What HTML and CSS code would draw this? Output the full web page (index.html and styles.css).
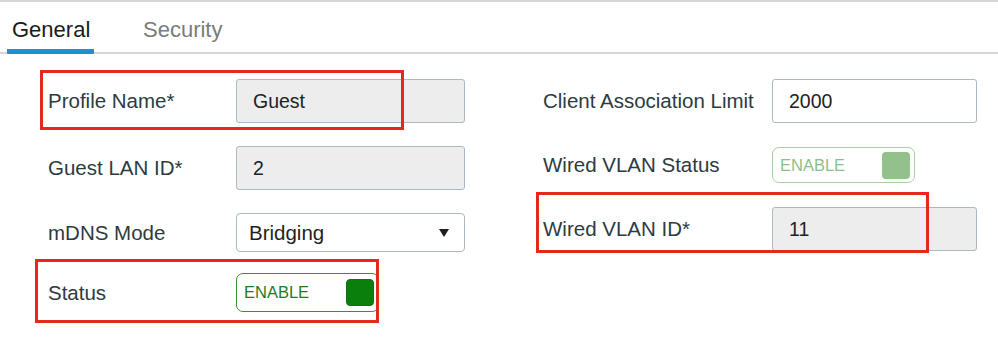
FILE: index.html
```html
<!DOCTYPE html>
<html lang="en">
<head>
    <meta charset="UTF-8">
    <title>Guest LAN Profile</title>
    <link rel="stylesheet" href="styles.css">
</head>
<body>

<div class="page">
    <div class="tabs">
        <div class="tab active">General</div>
        <div class="tab">Security</div>
    </div>

    <div class="form">
        <div class="column left">
            <div class="row">
                <div class="label">Profile Name*</div>
                <div class="field readonly">Guest</div>
            </div>
            <div class="row">
                <div class="label">Guest LAN ID*</div>
                <div class="field readonly">2</div>
            </div>
            <div class="row">
                <div class="label">mDNS Mode</div>
                <div class="select">Bridging<span class="caret"></span></div>
            </div>
            <div class="row tight">
                <div class="label">Status</div>
                <div class="toggle on">
                    <span class="toggle-text">ENABLE</span>
                    <span class="knob"></span>
                </div>
            </div>
        </div>

        <div class="column right">
            <div class="row">
                <div class="label">Client Association Limit</div>
                <div class="field">2000</div>
            </div>
            <div class="row">
                <div class="label">Wired VLAN Status</div>
                <div class="toggle disabled">
                    <span class="toggle-text">ENABLE</span>
                    <span class="knob"></span>
                </div>
            </div>
            <div class="row">
                <div class="label">Wired VLAN ID*</div>
                <div class="field readonly">11</div>
            </div>
        </div>
    </div>

    <!-- annotation boxes drawn over the form -->
    <div class="mark mark-profile"></div>
    <div class="mark mark-status"></div>
    <div class="mark mark-vlan"></div>
</div>

</body>
</html>
```

FILE: styles.css
```css
* {
    margin: 0;
    padding: 0;
    box-sizing: border-box;
}

body {
    width: 998px;
    height: 348px;
    overflow: hidden;
    background: #ffffff;
    font-family: 'Liberation Sans', Arial, sans-serif;
}

.page {
    position: relative;
    width: 998px;
    height: 348px;
}

/* Tabs */
.tabs {
    display: flex;
    height: 54px;
    padding-left: 7px;
    border-top: 2px solid #d6d6d6;
    border-bottom: 2px solid #d6d6d6;
}

.tab {
    height: 52px;
    padding: 15px 5px 6px;
    font-size: 22px;
    line-height: 26px;
    color: #7b7b7b;
}

.tab.active {
    width: 87px;
    color: #1b1b1b;
    border-bottom: 5px solid #1d8fd4;
    border-radius: 0 0 1px 1px;
}

.tab + .tab {
    margin-left: 44px;
}

/* Form */
.form {
    display: flex;
    padding: 25px 0 0 48px;
}

.column {
    display: flex;
    flex-direction: column;
    gap: 23px;
}

.column.right {
    margin-left: 78px;
    padding-top: 0;
}

.row {
    display: flex;
    align-items: center;
}

.row.tight {
    margin-top: -2px;
}

.right .row + .row {
    margin-top: 1px;
}

.label {
    font-size: 20.5px;
    color: #2d3b3f;
}

.left .label {
    width: 188px;
}

.right .label {
    width: 229px;
}

.field {
    display: flex;
    align-items: center;
    height: 44px;
    padding-left: 16px;
    border: 1px solid #a9bac6;
    border-radius: 3px;
    background: #ffffff;
    font-size: 19.5px;
    color: #222222;
}

.left .field {
    width: 229px;
}

.right .field {
    width: 205px;
}

.field.readonly {
    background: #ededed;
}

.select {
    display: flex;
    align-items: center;
    justify-content: space-between;
    width: 229px;
    height: 39px;
    padding: 0 15px 0 12px;
    border: 1px solid #a9bac6;
    border-radius: 4px;
    font-size: 20.5px;
    color: #1f1f1f;
}

.caret {
    width: 0;
    height: 0;
    border-left: 5px solid transparent;
    border-right: 5px solid transparent;
    border-top: 8px solid #1f1f1f;
}

/* Toggle */
.toggle {
    display: flex;
    align-items: center;
    justify-content: space-between;
    width: 143px;
    padding: 0 4px 0 7px;
    border-radius: 7px;
    font-size: 16.5px;
}

.toggle.on {
    height: 39px;
    border: 1.5px solid #3a8f36;
    color: #1c7d1c;
}

.toggle.disabled {
    height: 36px;
    border: 1.5px solid #a9d0a1;
    color: #8dbf86;
}

.knob {
    width: 28px;
    height: 27px;
    border-radius: 4px;
}

.on .knob {
    background: #0b7f0b;
    border: 1px solid #196a19;
}

.disabled .knob {
    background: #93c18b;
}

/* Red annotation boxes */
.mark {
    position: absolute;
    border: 3px solid #e4291c;
}

.mark-profile {
    left: 40px;
    top: 70px;
    width: 364px;
    height: 60px;
}

.mark-status {
    left: 35px;
    top: 259px;
    width: 344px;
    height: 64px;
}

.mark-vlan {
    left: 536px;
    top: 192px;
    width: 393px;
    height: 61px;
}
```
